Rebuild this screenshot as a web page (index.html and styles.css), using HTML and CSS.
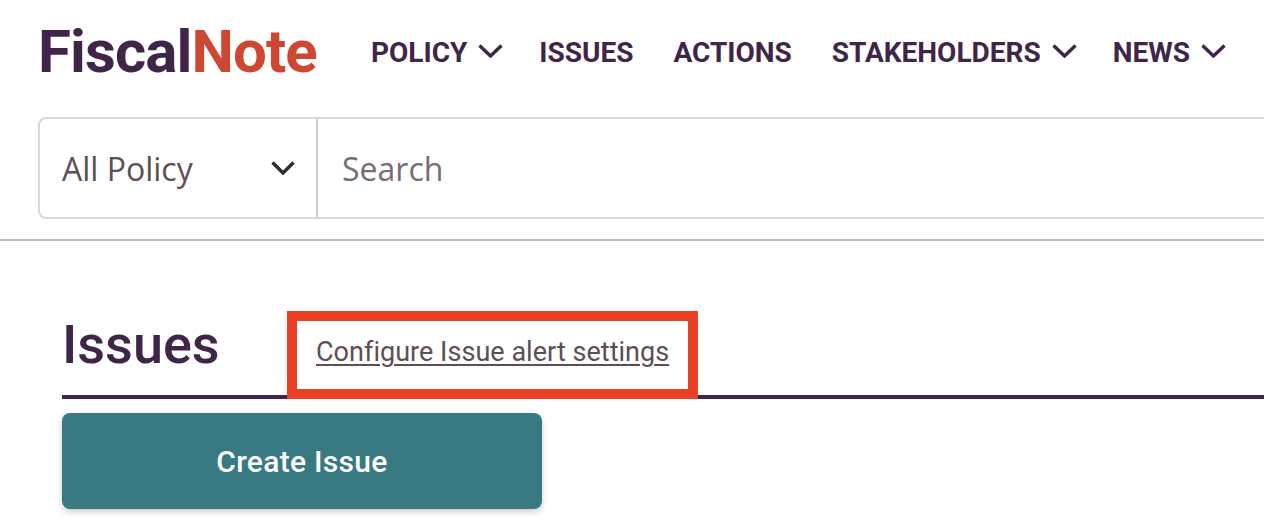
FILE: index.html
```html
<!DOCTYPE html>
<html lang="en">

<head>
    <meta charset="UTF-8">
    <title>FiscalNote - Issues</title>
    <link rel="stylesheet" href="styles.css">
</head>

<body>
    <header class="site-header">
        <div class="top-row">
            <a class="logo" href="#">Fiscal<span class="logo-accent">Note</span></a>
            <nav class="main-nav">
                <a class="nav-item has-menu" href="#">POLICY
                    <svg class="chevron" viewBox="0 0 25 14"><path d="M1.5 1.5 12.5 12 23.5 1.5"/></svg>
                </a>
                <a class="nav-item" href="#">ISSUES</a>
                <a class="nav-item" href="#">ACTIONS</a>
                <a class="nav-item has-menu" href="#">STAKEHOLDERS
                    <svg class="chevron" viewBox="0 0 25 14"><path d="M1.5 1.5 12.5 12 23.5 1.5"/></svg>
                </a>
                <a class="nav-item has-menu" href="#">NEWS
                    <svg class="chevron" viewBox="0 0 25 14"><path d="M1.5 1.5 12.5 12 23.5 1.5"/></svg>
                </a>
            </nav>
        </div>
        <form class="search-bar">
            <div class="scope-select">
                <span>All Policy</span>
                <svg class="scope-chevron" viewBox="0 0 24 14"><path d="M1.5 1.5 12 12 22.5 1.5"/></svg>
            </div>
            <div class="search-field">Search</div>
        </form>
    </header>
    <main class="page">
        <div class="title-row">
            <h1 class="title">Issues</h1>
            <div class="callout">
                <a class="alert-link" href="#">Configure Issue alert settings</a>
            </div>
        </div>
        <button class="create-btn" type="button">Create Issue</button>
    </main>
</body>

</html>
```

FILE: styles.css
```css
html {
    font-family: Roboto, 'Liberation Sans', sans-serif;
    color: #3f2548;
}

body {
    margin: 0;
    height: 530px;
    overflow: hidden;
    background: #fff;
}

a {
    color: inherit;
    text-decoration: none;
}

.site-header {
    height: 239px;
    padding-left: 38px;
    border-bottom: 2px solid #bdbacb;
}

.top-row {
    display: flex;
    align-items: center;
    height: 117px;
    padding-bottom: 13px;
    box-sizing: border-box;
}

.logo {
    width: 333px;
    flex: none;
    font-size: 60px;
    font-weight: 700;
    letter-spacing: -0.9px;
    line-height: 1;
}

.logo-accent {
    color: #cf4633;
}

.main-nav {
    display: flex;
    align-items: center;
    gap: 40px;
    white-space: nowrap;
}

.nav-item {
    display: flex;
    align-items: center;
    gap: 11px;
    font-size: 28px;
    font-weight: 700;
}

.has-menu {
    margin-right: -4px;
}

.chevron {
    width: 25px;
    height: 14px;
    margin-top: -2px;
}

.chevron path,
.scope-chevron path {
    fill: none;
    stroke: currentColor;
    stroke-width: 3.4;
}

.search-bar {
    display: flex;
    height: 102px;
    box-sizing: border-box;
    border: 2px solid #d8d8d8;
    border-right: none;
    border-radius: 8px 0 0 8px;
    font-family: 'Open Sans', sans-serif;
    font-size: 32px;
}

.scope-select {
    display: flex;
    align-items: center;
    justify-content: space-between;
    width: 278px;
    flex: none;
    box-sizing: border-box;
    padding: 0 21px 0 22px;
    border-right: 2px solid #d0d0d0;
    color: #5d4f55;
}

.scope-chevron {
    width: 24px;
    height: 14px;
    color: #2d2d2d;
}

.search-field {
    display: flex;
    align-items: center;
    padding-left: 24px;
    color: #7a6c70;
}

.page {
    padding: 66px 0 0 62px;
}

.title-row {
    display: flex;
    align-items: flex-end;
    height: 88px;
    border-bottom: 4px solid #3f2548;
}

.title {
    width: 225px;
    flex: none;
    margin: 0;
    padding-bottom: 12px;
    align-self: center;
    font-size: 54px;
    font-weight: 500;
    line-height: 1;
}

.callout {
    display: flex;
    align-items: center;
    box-sizing: border-box;
    height: 88px;
    margin-bottom: -4px;
    padding: 0 19px 6px;
    border: 10px solid #ea4025;
}

.alert-link {
    font-size: 27px;
    font-weight: 400;
    letter-spacing: 0.03px;
    color: #5d4f55;
    text-decoration: underline;
    text-underline-offset: 3px;
    text-decoration-thickness: 2px;
    white-space: nowrap;
}

.create-btn {
    display: block;
    width: 480px;
    height: 96px;
    margin-top: 14px;
    border: none;
    border-radius: 8px;
    background: #387982;
    box-shadow: 0 3px 6px rgba(0, 0, 0, 0.2);
    color: #fff;
    font-family: inherit;
    font-size: 30px;
    font-weight: 500;
    letter-spacing: 0.3px;
}
```
